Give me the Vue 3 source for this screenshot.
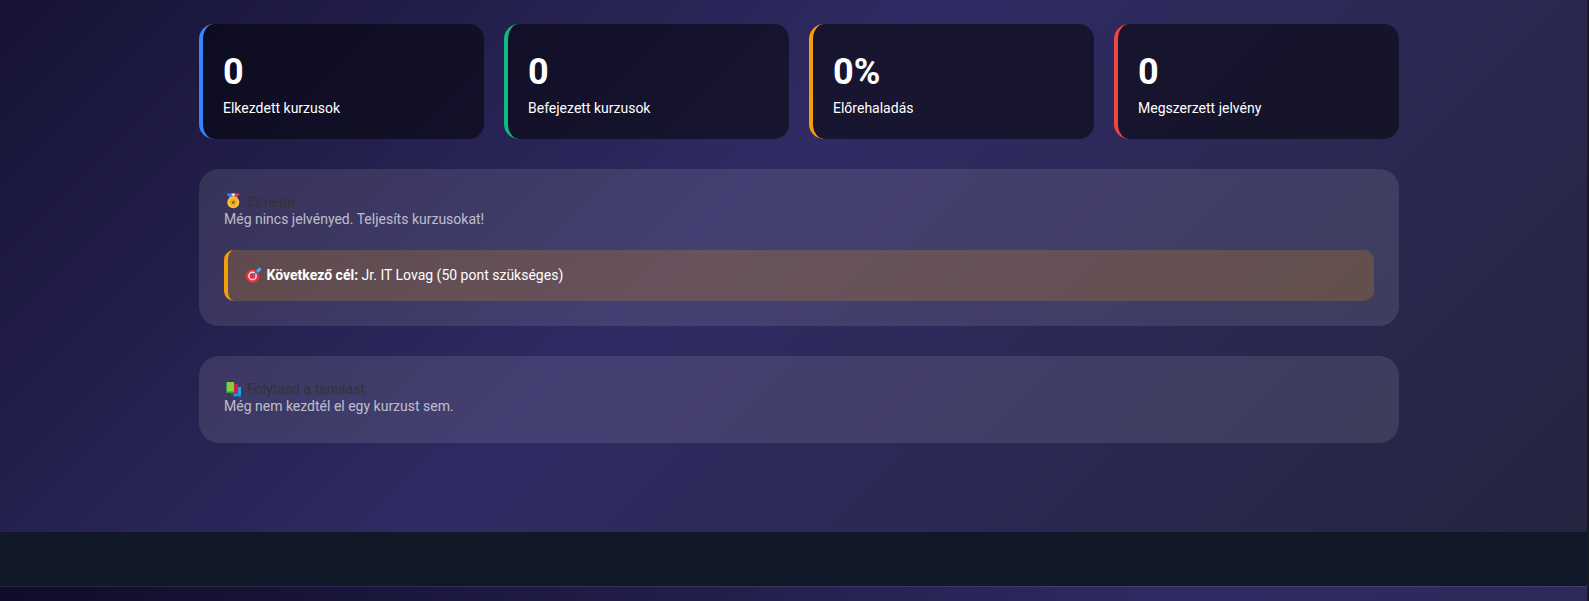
<script setup>
const stats = [
  { value: '0', label: 'Elkezdett kurzusok', color: '#3b82f6' },
  { value: '0', label: 'Befejezett kurzusok', color: '#10b981' },
  { value: '0%', label: 'Előrehaladás', color: '#f59e0b' },
  { value: '0', label: 'Megszerzett jelvény', color: '#ef4444' }
]
</script>

<template>
  <div class="page">
    <main class="main">
      <div class="container">
        <div class="stats">
          <div
            v-for="stat in stats"
            :key="stat.label"
            class="stat-card"
            :style="{ borderLeftColor: stat.color }"
          >
            <div class="stat-value">{{ stat.value }}</div>
            <div class="stat-label">{{ stat.label }}</div>
          </div>
        </div>

        <section class="panel">
          <h3>
            <svg class="icon" width="19" height="19" viewBox="0 0 19 19" aria-hidden="true">
              <path d="M2.5 0.5h4.5l3.5 6h-3.5z" fill="#3f86e0" />
              <path d="M16 0.5h-4.5l-3.5 6h3.5z" fill="#e23a44" />
              <path d="M7 0.5h4.5l-2 3.4z" fill="#f4f5f8" />
              <circle cx="9.3" cy="9.2" r="6" fill="#fbc53c" />
              <circle cx="9.3" cy="9.2" r="4.4" fill="#f3b22c" />
              <path d="M9.3 6.8l0.8 1.6 1.7 0.2-1.3 1.2 0.4 1.7-1.6-0.9-1.6 0.9 0.4-1.7-1.3-1.2 1.7-0.2z" fill="#96622a" />
            </svg>
            <span>Címeim</span>
          </h3>
          <p class="muted">Még nincs jelvényed. Teljesíts kurzusokat!</p>
          <div class="next-goal">
            <svg class="goal-icon" width="18" height="18" viewBox="0 0 18 18" aria-hidden="true">
              <circle cx="7.5" cy="10" r="6.7" fill="#e5323f" />
              <circle cx="7.5" cy="10" r="4.4" fill="#f6e6e6" />
              <circle cx="7.5" cy="10" r="3" fill="#e5323f" />
              <path d="M7.5 10L12.5 5" stroke="#3a7fc8" stroke-width="1.4" />
              <path d="M11 4.4L14.4 1.6 16 2.4 16 4 13.4 6.8z" fill="#45aef2" />
            </svg>
            <strong>Következő cél:</strong> Jr. IT Lovag (50 pont szükséges)
          </div>
        </section>

        <section class="panel">
          <h3>
            <svg class="icon" width="19" height="19" viewBox="0 0 19 19" aria-hidden="true">
              <rect x="9.5" y="7" width="7.5" height="9.5" fill="#1ea5e8" />
              <rect x="10" y="15.5" width="7" height="1" fill="#1266a8" />
              <rect x="6" y="4" width="8" height="10" fill="#cf2148" />
              <rect x="2" y="2" width="8" height="11" fill="#3c8f3e" />
              <rect x="3" y="2" width="7" height="9.5" fill="#82d13a" />
            </svg>
            <span>Folytasd a tanulást</span>
          </h3>
          <p class="muted">Még nem kezdtél el egy kurzust sem.</p>
        </section>
      </div>
    </main>
    <footer class="footer" />
    <div class="after-footer" />
    <div class="scroll-edge" />
  </div>
</template>

<style scoped>
.page {
  font-family: Roboto, "Noto Sans", sans-serif;
  color: #fff;
}

.main {
  height: 532px;
  padding-top: 24px;
  box-sizing: border-box;
}

.container {
  width: 1200px;
  margin-left: 199px;
}

.stats {
  display: grid;
  grid-template-columns: repeat(4, 1fr);
  gap: 20px;
  margin-bottom: 30px;
}

.stat-card {
  height: 115px;
  box-sizing: border-box;
  padding: 25px 20px 22px;
  background: rgba(0, 0, 0, 0.5);
  border-left: 4px solid;
  border-radius: 15px;
}

.stat-value {
  font-size: 36px;
  font-weight: 700;
  line-height: 46px;
  margin-bottom: 5px;
}

.stat-label {
  font-size: 14px;
  line-height: 17px;
}

.panel {
  padding: 25px;
  margin-bottom: 30px;
  background: rgba(255, 255, 255, 0.1);
  border-radius: 20px;
}

.panel h3 {
  display: flex;
  align-items: center;
  gap: 4px;
  height: 17px;
  margin: 0;
  font-size: 14px;
  font-weight: 400;
  line-height: 17px;
  color: #333;
}

.icon {
  flex: none;
}

.muted {
  margin: 0 0 3px;
  font-size: 14px;
  line-height: 17px;
  color: rgba(255, 255, 255, 0.68);
}

.next-goal {
  margin-top: 22px;
  padding: 16px 17px;
  font-size: 14px;
  line-height: 19px;
  background: rgba(245, 158, 11, 0.2);
  border-left: 4px solid #f59e0b;
  border-radius: 10px;
}

.goal-icon {
  margin-right: 3.5px;
  vertical-align: -4px;
}

.footer {
  height: 54px;
  background: #111827;
}

.after-footer {
  height: 15px;
  border-top: 1px solid rgba(255, 255, 255, 0.1);
  box-sizing: border-box;
}

.scroll-edge {
  position: fixed;
  top: 0;
  right: 0;
  bottom: 0;
  width: 2px;
  background: #1a1a1f;
}
</style>

<style>
html {
  background: linear-gradient(135deg, #0f0c29, #302b63, #24243e) 0 -253px / 1587px 839px repeat;
}

body {
  overflow: hidden;
}
</style>
